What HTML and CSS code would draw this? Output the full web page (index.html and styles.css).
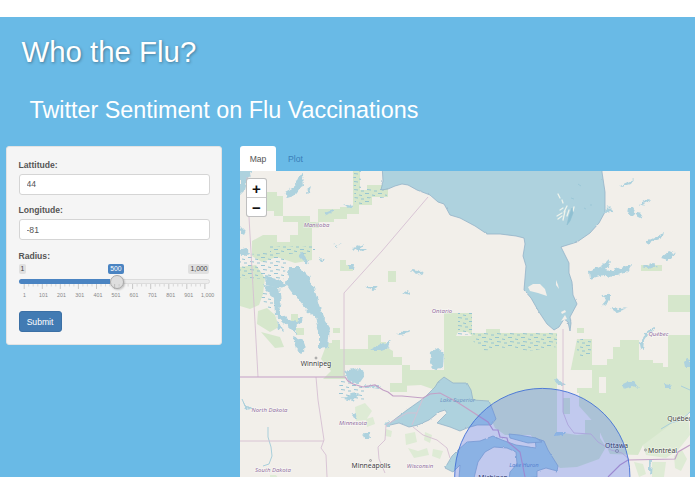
FILE: index.html
```
<!DOCTYPE html>
<html lang="en">
<head>
    <meta charset="UTF-8">
    <meta name="viewport" content="width=device-width, initial-scale=1.0">
    <title>Who the Flu?</title>
    <link rel="stylesheet" href="styles.css">
</head>
<body>

    <div class="page">
        <h1>Who the Flu?</h1>
        <h2>Twitter Sentiment on Flu Vaccinations</h2>

        <div class="row">
            <form class="well">
                <label for="lat">Lattitude:</label>
                <input id="lat" type="text" value="44">
                <label for="long">Longitude:</label>
                <input id="long" type="text" value="-81">
                <label>Radius:</label>
                <div class="slider">
                    <div class="slider-labels">
                        <span>1</span>
                        <span class="current">500</span>
                        <span>1,000</span>
                    </div>
                    <div class="track"><div class="bar"></div><div class="handle"></div></div>
                    <svg class="grid" viewBox="0 0 194 16">
                        <path class="minor" d="M9.7 0v2.5M14.2 0v2.5M18.8 0v2.5M27.8 0v2.5M32.3 0v2.5M36.8 0v2.5M45.8 0v2.5M50.4 0v2.5M54.9 0v2.5M63.9 0v2.5M68.4 0v2.5M73 0v2.5M82 0v2.5M86.5 0v2.5M91 0v2.5M100.1 0v2.5M104.6 0v2.5M109.1 0v2.5M118.1 0v2.5M122.6 0v2.5M127.2 0v2.5M136.2 0v2.5M140.7 0v2.5M145.2 0v2.5M154.3 0v2.5M158.8 0v2.5M163.3 0v2.5M172.3 0v2.5M176.8 0v2.5M181.4 0v2.5" />
                        <path class="major" d="M5.2 0v5M23.3 0v5M41.3 0v5M59.4 0v5M77.5 0v5M95.6 0v5M113.6 0v5M131.7 0v5M149.8 0v5M167.8 0v5M185.9 0v5" />
                        <text x="5.5" y="12.5">1</text>
                        <text x="24.5" y="12.5">101</text>
                        <text x="42.5" y="12.5">201</text>
                        <text x="60.7" y="12.5">301</text>
                        <text x="79" y="12.5">401</text>
                        <text x="97" y="12.5">501</text>
                        <text x="115" y="12.5">601</text>
                        <text x="133.5" y="12.5">701</text>
                        <text x="151.7" y="12.5">801</text>
                        <text x="169.7" y="12.5">901</text>
                        <text x="188.7" y="12.5">1,000</text>
                    </svg>
                </div>
                <button type="button">Submit</button>
            </form>

            <div class="main">
                <div class="tabs">
                    <a class="active">Map</a>
                    <a>Plot</a>
                </div>
                <div class="map">
                    <div class="zoom">
                        <a>+</a>
                        <a>−</a>
                    </div>
                    <svg viewBox="240 171 450 306">
                        <defs>
                            <filter id="rough" x="-5%" y="-5%" width="110%" height="110%">
                                <feTurbulence type="fractalNoise" baseFrequency="0.2" numOctaves="3" seed="4" />
                                <feDisplacementMap in="SourceGraphic" scale="5" xChannelSelector="R" yChannelSelector="G" />
                            </filter>
                            <filter id="coast" x="-5%" y="-5%" width="110%" height="110%">
                                <feTurbulence type="fractalNoise" baseFrequency="0.2" numOctaves="2" seed="8" />
                                <feDisplacementMap in="SourceGraphic" scale="2" xChannelSelector="R" yChannelSelector="G" />
                            </filter>
                            <pattern id="marsh" width="13" height="8" patternUnits="userSpaceOnUse">
                                <path d="M1 1.5h4M8 3l3 .6M3 5.5l4 .5M10 7h3" stroke="#8fc1d2" stroke-width=".9" />
                            </pattern>
                        </defs>

                        <!-- forest -->
                        <g class="forest">
                            <path d="M267 192h10v4h6v20h-9v-5h-7z" />
                            <path d="M283 216h27v6h9v6h-7v27h-22v-20h8v-13h-15z" />
                            <path d="M318 209h22v-2h13v-36h7v19h7v-5h21v12h-16v8h-13v9h-12v5h-13v3h-16z" />
                            <path d="M252 241l11-6h14v7h13v10h22v8l-17 3-18-6-15 5-10-6z" />
                            <path d="M240 267l16-2 9 13-2 16-4 11-9 4-10-3z" />
                            <path d="M258 311l9-3 8 7 4 12-9 5-13-8z" />
                            <path d="M261 332l19 5 4 10-9 1z" />
                            <path d="M340 260h6v5h7v6h-13zM333 328h7v5h-7zM291 314h7v10h-7zM296 328h8v7h-8z" />
                            <path d="M327 343h5v-3h8v9h28v-14h13v7h5v5l7 4v6h9v8h8v5h34v-57h28v20h14v-4h14v4h57v102h-52l-10-7-7-15-18-2-4-16-14-2-14-2-17-6-19 1v-21h-57v14l-22 0 8-8-10-12z" />
                            <path d="M388 271h8v11h-8zM390 383h17v9h-17z" />
                            <path d="M577 328h7v5h-7zM577 339h15v26h15v-6h6v-12h7v-7h19v20h14v3h10v4h5v-32h22v77l-20 13-10 15-17 5-5 10-28-1-13-28-18-20v-13h-13z" />
                            <path d="M668 295h22v17h-22zM641 265h21v6h-21z" />
                            <path d="M530 434l27-2 20 3 8-1v-14h15v18l6 9-7 12-22 8-17 1-18-17z" />
                            <path d="M563 398h7v16h-7zM566 388h8l6 4h-12z" />
                            <path class="faint" d="M355 407l10-4 7 8-6 9-10 1zM366 419l7-2 2 7-8 3zM405 434l10-2 2 10-11 3zM425 432l7 3-2 8-6-3zM408 448l10 3 9-3 2 7-15 3zM433 449l10 2-3 8-8-3zM386 429l6 2-1 6-6-1zM270 475l6 0 2 3h-8zM634 462l9 2 3 10-7 3zM652 462l14 0-2 15h-12zM674 456l8-6 5 9-6 12-6-3zM643 445l27-20 18-12 2 22-12 15-12 8-20-3z" />
                        </g>
                        <path class="land" d="M564 370h28v18h-15v6h-13zM599 377h7v16h-7zM458 332h10l4 4h-16z" />
                        <g fill="url(#marsh)">
                            <path d="M353 171h8v18h26v9h-17v7h-15zM458 313h14v22h-14zM473 333h84v14l-28 4-20-4-26 4-10-10zM577 339h14v18h-14z" />
                            <path d="M240 255l32-3 16 8-5 20-43-2zM270 246h45v8h-45zM340 380l25 6v14l-27-3zM258 290h22v20h-12z" />
                        </g>

                        <!-- large water -->
                        <g class="water shore" filter="url(#coast)">
                            <path d="M382 165l1 16-2 9 7-1 7-3 7-2 6 1 9 5 13 5 8 7 6 2 6 11 10 3 15 8 12 8 13 0 16 2 8 2 1 6-2 12 3 10-2 24 7 8 8 14 8 12 7 6 5-3 5-8 4 3 2 9 1-8-1-6 7-13-4-9-1-13-3-9 0-10-6-12-2-4 16-5 13-9 9-10 6-11 0-20-3-20v-10z" />
                            <path d="M386 426l21-16 17-12 11-11 3-5 6-5 9 6h14l4 7 2 10 16 1 3 7 4 11-5 6-14 0-10 3-7 3-10-4-13-4 10-10-2-3-6 2-10 8-11 5-9 2-10-4z" />
                            <path d="M445 468l7-12 6-6 9-8 13-1 13-5 9 4 14 5 20 3-1-10 9 3 4 9 10 16-1 5-11-3-9 3v6l-28 2 1-7 7-8-1-12-9-4-13-1-9 5-7 10-4 16h-15l1-13-7 7z" />
                            <path d="M509 434l10 1 17 3 6 4-14 1-18-5z" />
                        </g>
                        <path class="land" d="M528 287l5-3h7l5 5 2 7-9-3-8-2zM561 321l4-6 2 4zM556 280l2 5 1 4-3-4zM561 312l4-2 1 2-4 2z" />
                        <g class="islands">
                            <path d="M557 216l5-3M558 219l4-3M564 212l3-6M563 220l2-9M567 216l2-6M573 211l1-4M560 210l3-2M558 194l2 4M562 200l1 3" />
                        </g>
                        <path class="deep" d="M567 225l2-9 3-8 1 5-3 8zM571 198l3 1M584 208l2 1M590 205h2M578 184l3 2" />

                        <!-- lakes -->
                        <g class="water" filter="url(#rough)">
                            <path d="M289 268l12 0 8 8 6 15 4 14 6 15 5 8-2 20-9 1 0-17-4-15-8-6-9-11-8-10-4-6z" />
                            <path d="M263 285l16 2 2 14-2 12 10 7 8 2-1 12-5-5-8-7-8-7-1-17-8-8z" />
                            <path d="M293 336l10 4 3 8-6 5-4-3zM265 276l11 2 12 8-10 2-12-3zM277 322l4 3 2 6-4-2zM299 251l6 5 4 8-3-1-6-6zM299 318l4 0-3 6-3-1z" />
                            <path d="M285 192l9-5 5-11 4-2 1 12-4 2-6 8-7 2zM307 189l4-3-2 7-3 1zM240 171h13l-5 7-3 12-5 5z" />
                            <path d="M325 213l9-3 0 2-8 3zM343 204l9 2-3 2zM353 248l11-4-6 9zM334 245l8-2-7 4zM318 258l7 1-4 3zM348 265l7 0-1 4-6 0z" />
                            <path d="M411 269l8 1 4 3-6 2zM403 293l5-3 3 5-5-1zM398 334l6-3 8-1-3 3-10 2zM380 348l11-8-4 9-6 2zM431 352l7-4 6 5-1 14-8 3-5-7zM366 287l13 0-5 3z" />
                            <path d="M619 186l15-7-3 5-10 3zM639 205l10-6 2 2-11 5zM628 208l5 0 3 5-4 4-5-4zM637 213l5 1-2 4-4-2zM606 205l7 7-8 1zM646 241l18-8-2 5-15 6z" />
                            <path d="M589 271l13-6 6-6 3 4-6 7 6 1 14-5 5 3-6 4-17 5-4-3-13 4zM643 267l10-4 4 3-8 3zM661 258l8-7 7 3-8 6zM619 268l13-3-5 5z" />
                            <path d="M602 297l8-5 0 8-6 6-1-3 3-4zM610 308l10 1 8-1-12 4zM640 344l5-10 9-7 2 1-8 6-4 6-1 10-2-1zM684 362l3-3 3 1v7h-5z" />
                            <path d="M344 371l14-3 7 5-8 11-8-3zM344 399l7-5 8-1-7 8zM353 413l4 2-2 4-3-2zM363 433l6 0 1 5-5 0zM384 423l6-2 0 5-5 0zM365 384l8 2 8 0-3 3-12-2z" />
                            <path d="M554 379l6 1 6 5-9 0zM622 385l6-3 6 0 5 6-6-2-9 3zM664 383l6 1 1 5-5 0zM370 350l12-7 8 4-10 3zM649 460l3 0-1 15-2-3zM554 432l11 0-2 3-8 1z" />
                            <path d="M241 226l5 5-2 4-4-3zM240 250l7-2 3 6-9 2zM357 249l9 0-4 3zM243 401l3 5 5 3-5 1z" />
                        </g>
                        <path class="river" d="M242 399l3 7 8 3M268 427v10l3 10 1 9-3 8-6 2M661 429l10-6 10-3 9-8M681 386l9 4" />

                        <!-- borders -->
                        <g class="border">
                            <path d="M247 177l1 23 3 52 4 70 3 55M428 197l-46 54-38 42v83M563 329v83l5 13 6 8 17 1 7 8 13 8 11 3 7 6" />
                            <path d="M316 377l2 23 3 20 3 20-3 8 5 7 1 22M240 441h84M386 425l-1 15-7 7 1 12 6 14M413 427l10 8 14 5 10 8 3 10M423 398l-6 15-10 0-21 12M417 413l-5 12" />
                        </g>
                        <path class="frontier" d="M240 377h105l3 4 5 3 10 3 12-2 8 5 5 2 5 4 9 0 21 2 7-4 10-1 17 9 31 20 5 8h5l2 7 7 1 1 4 12 10 3 15 2 10M608 477l12-12 8-5 47-1 3-7 12-7" />

                        <g class="place">
                            <circle cx="316" cy="358" r="1" />
                            <circle cx="370.500" cy="460.500" r="1" />
                            <circle cx="617" cy="451" r="1.500" />
                            <circle cx="645.500" cy="450" r="1" />
                            <text x="316" y="366">Winnipeg</text>
                            <text x="371" y="468">Minneapolis</text>
                            <text x="616.500" y="447.500">Ottawa</text>
                            <text x="662.500" y="452.500">Montréal</text>
                            <text x="679.500" y="420.500">Québec</text>
                            <text x="493" y="479.500">Michigan</text>
                        </g>
                        <g class="region">
                            <text x="316.500" y="226.500">Manitoba</text>
                            <text x="442" y="313">Ontario</text>
                            <text x="658.500" y="335.500">Québec</text>
                            <text x="269.500" y="411.500">North Dakota</text>
                            <text x="273" y="472">South Dakota</text>
                            <text x="353" y="424.500">Minnesota</text>
                            <text x="420" y="468">Wisconsin</text>
                        </g>
                        <g class="lake-name">
                            <text x="457.500" y="401.500">Lake Superior</text>
                            <text x="524" y="467">Lake Huron</text>
                        </g>

                        <circle class="radius" cx="542.300" cy="476" r="87.600" />
                    </svg>
                </div>
            </div>
        </div>
    </div>

</body>
</html>
```
FILE: styles.css
```
* {
    box-sizing: border-box;
}
body {
    margin: 0;
    padding-top: 17px;
    background-color: #fff;
    font-family: "Liberation Sans", Helvetica, Arial, sans-serif;
    font-size: 8.6px;
    color: #555;
}
.page {
    height: 460px;
    overflow: hidden;
    background-color: #69bae6;
}
h1 {
    margin: 0;
    padding: 17px 0 0 21.5px;
    font-size: 29.4px;
    line-height: 36px;
    font-weight: normal;
    color: #fff;
    text-shadow: 1px 1px 3px rgba(0, 0, 0, 0.35);
}
h2 {
    margin: 0;
    padding: 25px 0 0 29.5px;
    font-size: 23.35px;
    line-height: 30px;
    font-weight: normal;
    color: #fff;
}
.row {
    display: flex;
    align-items: flex-start;
    gap: 18.5px;
    padding: 21px 5.5px 0 6px;
}
.well {
    width: 215.5px;
    height: 198.5px;
    padding: 11.5px;
    background-color: #f5f5f5;
    border: 1px solid #e3e3e3;
    border-radius: 3px;
}
.well label {
    display: block;
    height: 15px;
    line-height: 12px;
    font-weight: bold;
}
.well input {
    display: block;
    width: 191px;
    height: 21px;
    margin-bottom: 9.7px;
    padding: 0 7px;
    border: 1px solid #d5d5d5;
    border-radius: 3px;
    background-color: #fff;
    font-family: inherit;
    font-size: 8.6px;
    color: #555;
}
.well button {
    display: block;
    width: 43px;
    height: 21px;
    margin-top: 10px;
    padding: 0;
    border: 1px solid #3b70a5;
    border-radius: 3px;
    background-color: #427bb3;
    color: #fff;
    font-family: inherit;
    font-size: 8.6px;
}
.slider {
    width: 191px;
    height: 37px;
    margin-top: -0.5px;
}
.slider-labels {
    display: flex;
    justify-content: space-between;
    height: 15px;
}
.slider-labels span {
    height: 9.5px;
    padding: 0 2px;
    border-radius: 2px;
    background-color: #e0e0e0;
    font-size: 6.8px;
    line-height: 9.5px;
    color: #444;
}
.slider-labels .current {
    margin-left: 17px;
    background-color: #4a84c2;
    color: #fff;
}
.track {
    display: flex;
    align-items: center;
    height: 5px;
    border: 1px solid #dcdcdc;
    border-radius: 3px;
    background-color: #ececec;
}
.bar {
    width: 91px;
    height: 5px;
    margin-left: -1px;
    flex-shrink: 0;
    border-radius: 3px 0 0 3px;
    background-color: #4a84c2;
}
.handle {
    width: 14px;
    height: 14px;
    flex-shrink: 0;
    border: 1px solid #aaa;
    border-radius: 50%;
    background-color: #dedede;
    box-shadow: 1px 1px 2px rgba(0, 0, 0, 0.2);
}
.grid {
    display: block;
    width: 194px;
    height: 16px;
    overflow: visible;
}
.grid text {
    font-size: 5.3px;
    text-anchor: middle;
    fill: #888;
}
.major {
    stroke: #a8a8a8;
    stroke-width: 0.6;
}
.minor {
    stroke: #b8b8b8;
    stroke-width: 0.5;
}
.main {
    flex: 1;
}
.tabs {
    display: flex;
    height: 25px;
}
.tabs a {
    padding: 0 9.5px 0 12px;
    line-height: 26px;
    color: #397fb9;
}
.tabs .active {
    width: 36px;
    padding: 0;
    border-radius: 3px 3px 0 0;
    background-color: #fff;
    text-align: center;
    color: #555;
}
.map {
    position: relative;
    height: 306px;
    overflow: hidden;
    background-color: #f2efea;
}
.map svg {
    display: block;
    width: 450px;
    height: 306px;
}
/* zoom buttons sit over the map */
.zoom {
    position: absolute;
    top: 7px;
    left: 6px;
    width: 21px;
    border: 1px solid rgba(0, 0, 0, 0.25);
    border-radius: 3px;
    background-color: #fff;
}
.zoom a {
    display: block;
    height: 18px;
    font-size: 15px;
    font-weight: bold;
    line-height: 19px;
    text-align: center;
    color: #111;
}
.zoom a + a {
    height: 19px;
    border-top: 1px solid #ccc;
}
.forest {
    fill: #d6e7cc;
}
.faint {
    fill: #deebd5;
}
.land {
    fill: #f2efea;
}
.water {
    fill: #aed2de;
}
.shore {
    stroke: #94b3c8;
    stroke-width: 0.8;
}
.deep {
    fill: #8fc0d2;
    stroke: #8fc0d2;
    stroke-width: 0.6;
}
.islands {
    stroke: #eef3ec;
    stroke-width: 1.3;
    stroke-linecap: round;
}
.river {
    fill: none;
    stroke: #a9cfdb;
    stroke-width: 1;
}
.border {
    fill: none;
    stroke: #d6c0d2;
    stroke-width: 0.9;
}
.frontier {
    fill: none;
    stroke: #c3a0c6;
    stroke-width: 1.2;
}
.place text,
.region text,
.lake-name text {
    font-family: "Noto Sans", "Open Sans", sans-serif;
    text-anchor: middle;
    paint-order: stroke;
    stroke: rgba(255, 255, 255, 0.6);
    stroke-width: 1.2;
}
.place text {
    font-size: 6.8px;
    fill: #3c3c3c;
}
.place circle {
    fill: #ddd;
    stroke: #888;
    stroke-width: 0.7;
}
.region text {
    font-size: 6px;
    font-style: italic;
    fill: #94719f;
}
.lake-name text {
    font-size: 5.8px;
    font-style: italic;
    fill: #6f97c4;
    stroke: none;
}
.radius {
    fill: #03f;
    fill-opacity: 0.2;
    stroke: #4270d6;
    stroke-width: 0.9;
}
```
